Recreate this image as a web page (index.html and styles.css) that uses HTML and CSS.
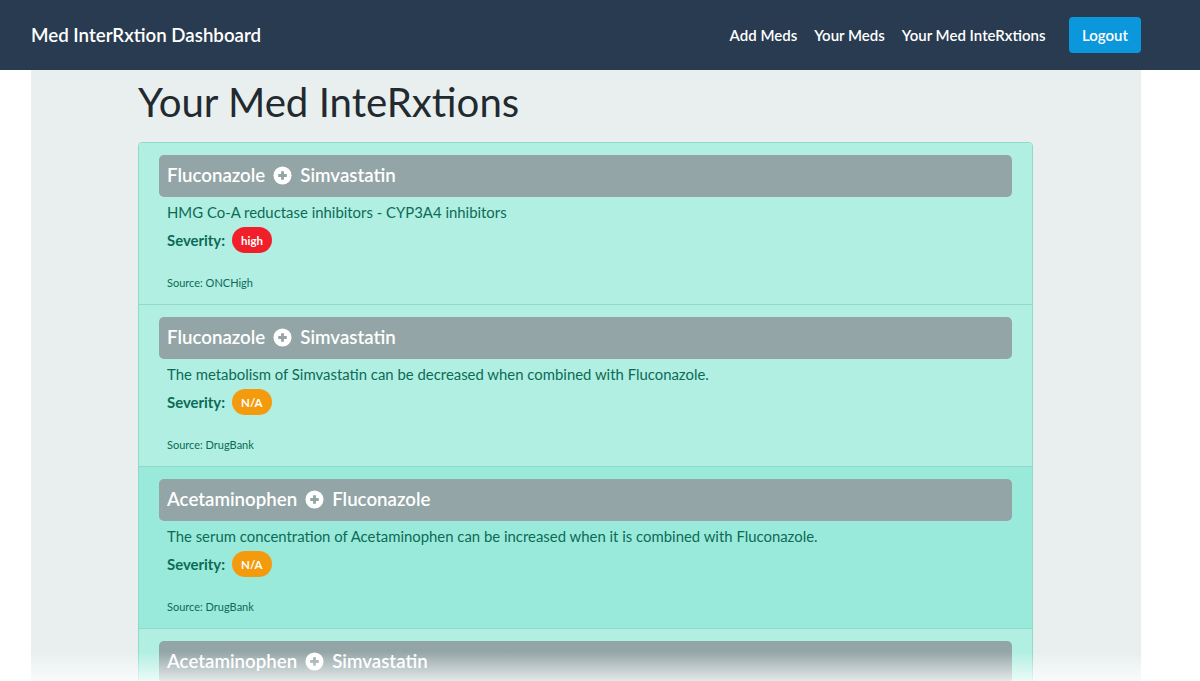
FILE: index.html
```html
<!DOCTYPE html>
<html lang="en">
<head>
<meta charset="utf-8">
<title>Med InterRxtion Dashboard</title>
<link rel="stylesheet" href="styles.css">
</head>
<body>
<nav class="navbar">
  <div class="nav-inner">
    <a class="brand" href="#">Med InterRxtion Dashboard</a>
    <div class="nav-links">
      <a class="nav-link" href="#">Add Meds</a>
      <a class="nav-link" href="#">Your Meds</a>
      <a class="nav-link" href="#">Your Med InteRxtions</a>
      <button class="btn-logout" type="button">Logout</button>
    </div>
  </div>
</nav>
<main class="container">
  <h1 class="title">Your Med InteRxtions</h1>
  <ul class="list">
    <li class="item">
      <div class="item-head">Fluconazole <svg class="plus" viewBox="0 0 20 20"><circle cx="10" cy="10" r="9.5" fill="#fff"/><path d="M10 5.5v9M5.5 10h9" stroke="#93a5a6" stroke-width="3"/></svg> Simvastatin</div>
      <p class="desc">HMG Co-A reductase inhibitors - CYP3A4 inhibitors</p>
      <div class="sev"><span class="sev-label">Severity:</span><span class="badge badge-high">high</span></div>
      <p class="source">Source: ONCHigh</p>
    </li>
    <li class="item">
      <div class="item-head">Fluconazole <svg class="plus" viewBox="0 0 20 20"><circle cx="10" cy="10" r="9.5" fill="#fff"/><path d="M10 5.5v9M5.5 10h9" stroke="#93a5a6" stroke-width="3"/></svg> Simvastatin</div>
      <p class="desc">The metabolism of Simvastatin can be decreased when combined with Fluconazole.</p>
      <div class="sev"><span class="sev-label">Severity:</span><span class="badge badge-na">N/A</span></div>
      <p class="source">Source: DrugBank</p>
    </li>
    <li class="item item-active">
      <div class="item-head">Acetaminophen <svg class="plus" viewBox="0 0 20 20"><circle cx="10" cy="10" r="9.5" fill="#fff"/><path d="M10 5.5v9M5.5 10h9" stroke="#93a5a6" stroke-width="3"/></svg> Fluconazole</div>
      <p class="desc">The serum concentration of Acetaminophen can be increased when it is combined with Fluconazole.</p>
      <div class="sev"><span class="sev-label">Severity:</span><span class="badge badge-na">N/A</span></div>
      <p class="source">Source: DrugBank</p>
    </li>
    <li class="item">
      <div class="item-head">Acetaminophen <svg class="plus" viewBox="0 0 20 20"><circle cx="10" cy="10" r="9.5" fill="#fff"/><path d="M10 5.5v9M5.5 10h9" stroke="#93a5a6" stroke-width="3"/></svg> Simvastatin</div>
      <p class="desc">The metabolism of Simvastatin can be decreased when combined with Acetaminophen.</p>
      <div class="sev"><span class="sev-label">Severity:</span><span class="badge badge-na">N/A</span></div>
      <p class="source">Source: DrugBank</p>
    </li>
  </ul>
</main>
<div class="fade"></div>
</body>
</html>
```

FILE: styles.css
```css
* { box-sizing: border-box; }
html, body { margin: 0; padding: 0; }
body {
  font-family: Lato, "Noto Sans", sans-serif;
  background: #ffffff;
  color: #212529;
}
.navbar {
  background: #283b50;
  height: 70px;
}
.nav-inner {
  width: 1110px;
  margin-left: 31px;
  height: 70px;
  display: flex;
  align-items: center;
  justify-content: space-between;
}
.brand {
  color: #fff;
  text-decoration: none;
  font-size: 18.7px;
  font-weight: 600;
  padding-bottom: 1px;
}
.nav-links {
  display: flex;
  align-items: center;
}
.nav-link {
  color: #fff;
  text-decoration: none;
  font-size: 15px;
  font-weight: 600;
  padding: 8px 8.5px;
}
.btn-logout {
  margin-left: 15px;
  background: #0b97dc;
  color: #fff;
  border: 0;
  border-radius: 4px;
  width: 72px;
  height: 36px;
  font-family: inherit;
  font-size: 15px;
  font-weight: 600;
  padding-bottom: 2px;
}
.container {
  width: 1110px;
  margin-left: 31px;
  background: #e9efef;
  padding: 8px 0 40px 107px;
  min-height: 611px;
}
.title {
  font-size: 40.2px;
  font-weight: 400;
  line-height: 48px;
  margin: 0 0 16px 0;
  color: #222a30;
}
.list {
  list-style: none;
  margin: 0;
  padding: 0;
  width: 895px;
  border: 1px solid #8fdac9;
  border-radius: 4px;
  overflow: hidden;
}
.item {
  background: #b1efe3;
  padding: 12px 20px 13px 20px;
  border-top: 1px solid #8fdac9;
  color: #0c6b55;
}
.item:first-child { border-top: 0; }
.item-active { background: #9aeadb; }
.item-head {
  background: #93a5a6;
  border-radius: 5px;
  height: 42px;
  display: flex;
  align-items: center;
  padding: 0 0 3px 8px;
  color: #fff;
  font-size: 18.7px;
  font-weight: 600;
  margin-bottom: 4px;
}
.plus {
  width: 19px;
  height: 19px;
  margin: 1px 8px 0 8px;
}
.desc {
  margin: 0 0 0 8px;
  font-size: 14.9px;
  line-height: 23px;
}
.sev {
  display: flex;
  align-items: center;
  height: 26px;
  margin: 3px 0 0 8px;
}
.sev-label {
  font-weight: 700;
  font-size: 14.9px;
  margin-right: 7px;
}
.badge {
  display: inline-flex;
  align-items: center;
  justify-content: center;
  height: 26px;
  border-radius: 13px;
  padding: 0 9px;
  color: #fff;
  font-size: 11.5px;
  font-weight: 700;
}
.badge-high { background: #f01f2a; }
.badge-na { background: #f49b0d; }
.source {
  margin: 22px 0 0 8px;
  font-size: 11px;
  line-height: 16px;
}
.fade {
  position: fixed;
  left: 0;
  right: 0;
  bottom: 0;
  height: 30px;
  background: linear-gradient(rgba(255,255,255,0), rgba(255,255,255,0.75));
  pointer-events: none;
}
```
